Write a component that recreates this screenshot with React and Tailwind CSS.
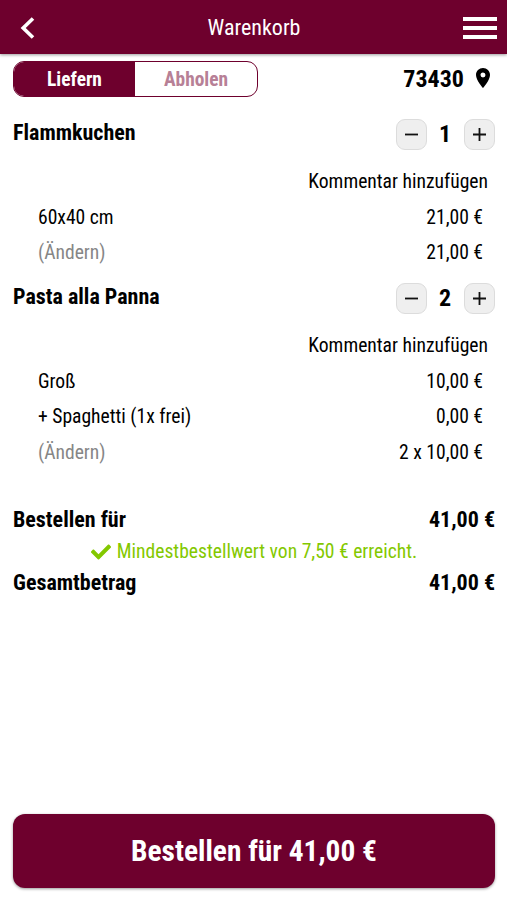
import { FaCheck } from "react-icons/fa";
import { MdLocationOn } from "react-icons/md";

const items = [
  {
    name: "Flammkuchen",
    count: 1,
    total: "21,00 €",
    options: [{ label: "60x40 cm", price: "21,00 €" }],
  },
  {
    name: "Pasta alla Panna",
    count: 2,
    total: "2 x 10,00 €",
    options: [
      { label: "Groß", price: "10,00 €" },
      { label: "+ Spaghetti (1x frei)", price: "0,00 €" },
    ],
  },
];

function Header() {
  return (
    <header className="flex h-[54px] shrink-0 items-center justify-between bg-[#6e002d] pt-0.5 pr-[10px] pl-5 text-white shadow-[0_1px_3px_rgba(0,0,0,0.4)]">
      <button type="button" aria-label="Zurück" className="w-[25px]">
        <svg width="16" height="22" viewBox="0 0 16 22" fill="none" stroke="currentColor" strokeWidth="3.6">
          <path d="M13 1.5 3.2 11 13 20.5" />
        </svg>
      </button>
      <h1 className="text-[22px]">Warenkorb</h1>
      <button type="button" aria-label="Menü" className="flex w-[34px] flex-col gap-[5px]">
        <span className="h-1 bg-white" />
        <span className="h-1 bg-white" />
        <span className="h-1 bg-white" />
      </button>
    </header>
  );
}

function CountButton({ plus }) {
  return (
    <button
      type="button"
      aria-label={plus ? "mehr" : "weniger"}
      className="flex size-[31px] items-center justify-center rounded-[9px] border border-[#dcdcdc] bg-[#efefef]"
    >
      <svg width="13" height="13" viewBox="0 0 13 13" stroke="#111" strokeWidth="1.8">
        <path d={plus ? "M0 6.5h13M6.5 0v13" : "M0 6.5h13"} />
      </svg>
    </button>
  );
}

function Row({ label, price, muted }) {
  return (
    <div className="flex h-[35.5px] items-center justify-between pr-3 pl-[25px]">
      <span className={muted ? "text-[#868686]" : ""}>{label}</span>
      <span>{price}</span>
    </div>
  );
}

function Item({ item }) {
  return (
    <section className="pt-[7px]">
      <div className="flex h-10 items-center justify-between">
        <h2 className="pb-[3px] text-[22px] font-bold">{item.name}</h2>
        <div className="flex items-center">
          <CountButton />
          <span className="w-[37px] pr-px text-center text-[24px] font-bold">{item.count}</span>
          <CountButton plus />
        </div>
      </div>
      <div className="mt-[9px] flex h-[37px] items-center justify-end pr-[7px]">Kommentar hinzufügen</div>
      {item.options.map((o) => (
        <Row key={o.label} label={o.label} price={o.price} />
      ))}
      <Row label="(Ändern)" price={item.total} muted />
    </section>
  );
}

function Total({ label }) {
  return (
    <div className="flex h-8 items-center justify-between text-[22px] font-bold">
      <span>{label}</span>
      <span>41,00 €</span>
    </div>
  );
}

function App() {
  return (
    <div className="flex h-[900px] w-full flex-col bg-white font-['Roboto_Condensed','Roboto',sans-serif] text-[19.6px] leading-none text-black [font-stretch:75%]">
      <Header />
      <main className="flex grow flex-col pt-[7px] pr-3 pl-[13px]">
        <div className="flex h-9 items-center justify-between">
          <div className="flex h-9 w-[245px] overflow-hidden rounded-[11px] border border-[#6e002d] text-[19.4px] font-bold">
            <button type="button" className="w-[121px] bg-[#6e002d] pt-0.5 text-white">Liefern</button>
            <button type="button" className="grow pt-0.5 text-[#b78096]">Abholen</button>
          </div>
          <div className="flex items-center gap-[7px] text-[24px] font-bold">
            73430
            <MdLocationOn size={24} className="mb-0.5" />
          </div>
        </div>
        <div className="mt-[10px]">
          {items.map((item) => (
            <Item key={item.name} item={item} />
          ))}
        </div>
        <div className="mt-[33px]">
          <Total label="Bestellen für" />
          <div className="flex h-[31px] items-center justify-center gap-[6px] pt-px text-[#83c800]">
            <FaCheck size={20} />
            Mindestbestellwert von 7,50 € erreicht.
          </div>
          <Total label="Gesamtbetrag" />
        </div>
        <button
          type="button"
          className="mt-auto mb-3 h-[74px] rounded-[12px] bg-[#6e002d] pt-0.5 text-[29.4px] font-bold text-white shadow-[0_1px_3px_rgba(0,0,0,0.4)]"
        >
          Bestellen für 41,00 €
        </button>
      </main>
    </div>
  );
}

export default App;
